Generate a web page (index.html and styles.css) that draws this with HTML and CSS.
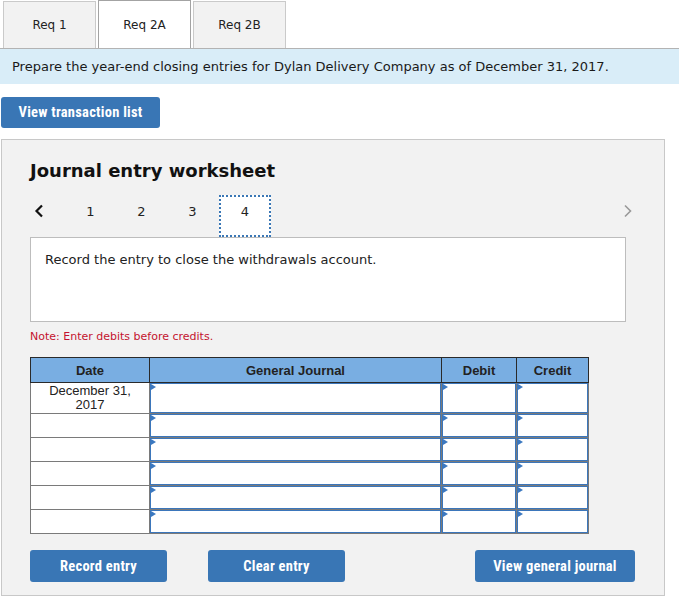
FILE: index.html
```html
<!DOCTYPE html>
<html lang="en">
<head>
  <meta charset="UTF-8">
  <title>Journal Entry Worksheet</title>
  <link rel="stylesheet" href="styles.css">
</head>
<body>

  <div class="tabs">
    <div class="tab">Req 1</div>
    <div class="tab active">Req 2A</div>
    <div class="tab">Req 2B</div>
  </div>

  <div class="prompt">Prepare the year-end closing entries for Dylan Delivery Company as of December 31, 2017.</div>

  <button class="btn btn-list">View transaction list</button>

  <div class="worksheet">
    <h2>Journal entry worksheet</h2>

    <div class="pager">
      <span class="arrow prev">
        <svg width="10" height="14" viewBox="0 0 10 14"><polyline points="8,1.5 2.5,7 8,12.5" fill="none" stroke="#111" stroke-width="2.2"/></svg>
      </span>
      <span class="page">1</span>
      <span class="page">2</span>
      <span class="page">3</span>
      <span class="page current">4</span>
      <span class="arrow next">
        <svg width="10" height="14" viewBox="0 0 10 14"><polyline points="2,1.5 7.5,7 2,12.5" fill="none" stroke="#999" stroke-width="1.6"/></svg>
      </span>
    </div>

    <div class="task">Record the entry to close the withdrawals account.</div>

    <p class="note">Note: Enter debits before credits.</p>

    <table class="journal">
      <thead>
        <tr>
          <th class="col-date">Date</th>
          <th class="col-account">General Journal</th>
          <th class="col-debit">Debit</th>
          <th class="col-credit">Credit</th>
        </tr>
      </thead>
      <tbody>
        <tr class="first">
          <td class="date">December 31,<br>2017</td>
          <td class="field"><span class="mark"></span></td>
          <td class="field"><span class="mark"></span></td>
          <td class="field"><span class="mark"></span></td>
        </tr>
        <tr>
          <td class="date"></td>
          <td class="field"><span class="mark"></span></td>
          <td class="field"><span class="mark"></span></td>
          <td class="field"><span class="mark"></span></td>
        </tr>
        <tr>
          <td class="date"></td>
          <td class="field"><span class="mark"></span></td>
          <td class="field"><span class="mark"></span></td>
          <td class="field"><span class="mark"></span></td>
        </tr>
        <tr>
          <td class="date"></td>
          <td class="field"><span class="mark"></span></td>
          <td class="field"><span class="mark"></span></td>
          <td class="field"><span class="mark"></span></td>
        </tr>
        <tr>
          <td class="date"></td>
          <td class="field"><span class="mark"></span></td>
          <td class="field"><span class="mark"></span></td>
          <td class="field"><span class="mark"></span></td>
        </tr>
        <tr>
          <td class="date"></td>
          <td class="field"><span class="mark"></span></td>
          <td class="field"><span class="mark"></span></td>
          <td class="field"><span class="mark"></span></td>
        </tr>
      </tbody>
    </table>

    <div class="actions">
      <button class="btn btn-record">Record entry</button>
      <button class="btn btn-clear">Clear entry</button>
      <button class="btn btn-view">View general journal</button>
    </div>
  </div>

</body>
</html>
```

FILE: styles.css
```css
body {
  margin: 0;
  font-family: "DejaVu Sans", Verdana, sans-serif;
  color: #222;
  background: #fff;
}

.tabs {
  display: flex;
  align-items: flex-end;
  gap: 2px;
  height: 48px;
  padding-left: 3px;
  border-bottom: 1px solid #b3b3b3;
}

.tab {
  width: 91px;
  height: 46px;
  border: 1px solid #cacaca;
  border-bottom: none;
  background: #f2f2f2;
  display: flex;
  align-items: center;
  justify-content: center;
  font-size: 12px;
  color: #222;
}

.tab.active {
  height: 47px;
  background: #fff;
  border-color: #a3a3a3;
}

.prompt {
  height: 35px;
  padding-left: 12px;
  display: flex;
  align-items: center;
  background: #d9edf8;
  font-size: 13px;
  color: #1a1a1a;
}

.btn {
  background: #3976b5;
  color: #fff;
  border: none;
  border-radius: 3px;
  height: 32px;
  font-family: "Liberation Sans Narrow", "Roboto Condensed", Roboto, sans-serif;
  font-weight: bold;
  font-size: 14.5px;
  letter-spacing: 0.25px;
  cursor: pointer;
}

.btn-list {
  display: block;
  width: 159px;
  height: 31px;
  margin: 13px 0 0 1px;
}

.worksheet {
  width: 596px;
  margin: 11px 0 0 1px;
  padding: 0 38px 13px 28px;
  border: 1px solid #c8c8c8;
  background: #f2f2f2;
}

h2 {
  margin: 20px 0 0;
  font-size: 18px;
  line-height: 22px;
  color: #111;
}

.pager {
  display: flex;
  align-items: flex-start;
  height: 42px;
  margin-top: 13px;
  font-size: 13px;
}

.arrow,
.page {
  display: flex;
  align-items: center;
  height: 32px;
}

.prev {
  width: 31px;
  padding-left: 4px;
}

.page {
  width: 51px;
  justify-content: center;
}

.page.current {
  box-sizing: border-box;
  width: 52px;
  height: 42px;
  padding-bottom: 10px;
  margin-left: 1px;
  border: 2px dotted #3a77b5;
  background: #fff;
}

.next {
  margin-left: auto;
  margin-right: -7px;
}

.task {
  box-sizing: border-box;
  height: 85px;
  padding: 14px 14px;
  border: 1px solid #bdbdbd;
  background: #fff;
  font-size: 13px;
  line-height: 15px;
}

.note {
  margin: 8px 0 0;
  font-size: 11px;
  line-height: 14px;
  color: #c4122f;
}

.journal {
  margin-top: 13px;
  border-collapse: collapse;
  table-layout: fixed;
  width: 557px;
  font-family: "Liberation Sans", Arial, sans-serif;
  font-size: 13px;
}

.journal th {
  height: 24px;
  padding: 0;
  background: #79aee2;
  border: 1px solid #2a2a2a;
  font-weight: bold;
  color: #222;
}

.col-date { width: 118px; }
.col-account { width: 291px; }
.col-debit { width: 74px; }
.col-credit { width: 71px; }

.journal td {
  height: 22px;
  padding: 0;
  border: 1px solid #7a7a7a;
  background: #fff;
}

.journal tr.first td {
  height: 29px;
}

.journal td.date {
  text-align: center;
  line-height: 14px;
  color: #222;
}

.journal td.field {
  vertical-align: top;
  padding: 1px 0 0 1px;
  box-shadow: inset 0 0 0 1px #3b76bb;
}

.mark {
  display: block;
  width: 0;
  height: 0;
  border-left: 5px solid #3b78c0;
  border-top: 3.5px solid transparent;
  border-bottom: 3.5px solid transparent;
}

.actions {
  display: flex;
  width: 605px;
  margin-top: 16px;
}

.btn-record,
.btn-clear {
  width: 137px;
}

.btn-clear {
  margin-left: 41px;
}

.btn-view {
  width: 160px;
  margin-left: auto;
}
```
